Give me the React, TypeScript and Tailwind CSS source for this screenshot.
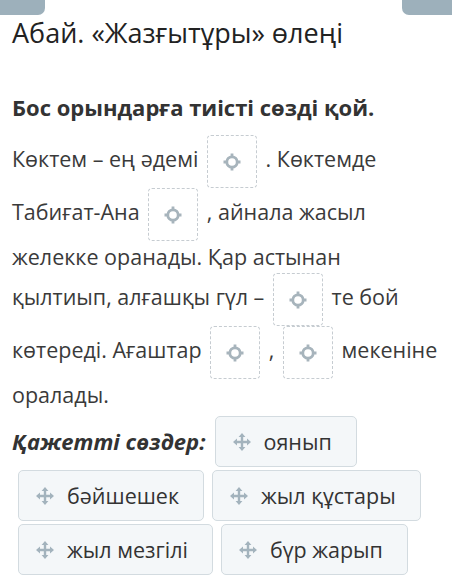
import React from 'react';

const TargetIcon: React.FC = () => (
  <svg width="22" height="22" viewBox="0 0 22 22" fill="none">
    <circle cx="11" cy="11" r="5.2" stroke="#a7b4bc" strokeWidth="2.8" />
    <path d="M11 2.5v3.6 M11 15.9v3.6 M2.5 11h3.6 M15.9 11h3.6" stroke="#a7b4bc" strokeWidth="2.8" />
  </svg>
);

const MoveIcon: React.FC = () => (
  <svg width="20" height="20" viewBox="0 0 20 20" fill="none">
    <path d="M10 4v12 M4 10h12" stroke="#a3b3bd" strokeWidth="2.4" />
    <path d="M10 1l-3.4 4h6.8z M10 19l-3.4-4h6.8z M1 10l4-3.4v6.8z M19 10l-4-3.4v6.8z" fill="#a3b3bd" />
  </svg>
);

const Blank: React.FC = () => (
  <span className="mx-[3px] inline-flex h-[53px] w-[50px] items-center justify-center rounded-[4px] border border-dashed border-[#c6ccd1] align-middle">
    <TargetIcon />
  </span>
);

const Tile: React.FC<{ word: string }> = ({ word }) => (
  <div className="ml-[6px] flex h-[51px] items-center gap-3 rounded-[5px] border border-[#d3dbe0] bg-[#f4f7f9] pl-4 pr-6 text-[21.5px] text-[#333]">
    <MoveIcon />
    <span>{word}</span>
  </div>
);

const App: React.FC = () => {
  const words = ['оянып', 'бәйшешек', 'жыл құстары', 'жыл мезгілі', 'бүр жарып'];

  return (
    <div className="h-[581px] w-[452px] overflow-hidden bg-white font-['Open_Sans',sans-serif]">
      {/* top bars */}
      <div className="flex justify-between">
        <div className="h-[15px] w-[45px] rounded-br-[7px] bg-[#9db0bb]" />
        <div className="h-[15px] w-[50px] rounded-bl-[7px] bg-[#9db0bb]" />
      </div>

      <h1 className="mt-[2px] px-3 text-[27px] leading-[1.2] text-[#222]">Абай. «Жазғытұры» өлеңі</h1>

      <p className="mt-[43px] px-3 text-[22px] font-bold leading-[30px] text-[#333]">
        Бос орындарға тиісті сөзді қой.
      </p>

      <div className="mt-[13px] px-3 text-[21.5px] leading-[32px] text-[#3a3a3a]">
        Көктем – ең әдемі <Blank /> . Көктемде Табиғат-Ана <Blank /> , айнала жасыл желекке оранады. Қар астынан
        қылтиып, алғашқы гүл – <Blank /> те бой көтереді. Ағаштар <Blank /> , <Blank /> мекеніне оралады.
      </div>

      <div className="mt-[5px] flex flex-wrap items-center gap-x-[2px] gap-y-[3px] pl-3">
        <span className="mr-[1px] text-[22px] font-bold italic text-[#333]">Қажетті сөздер:</span>
        {words.map((w) => (
          <Tile key={w} word={w} />
        ))}
      </div>
    </div>
  );
};

export default App;
